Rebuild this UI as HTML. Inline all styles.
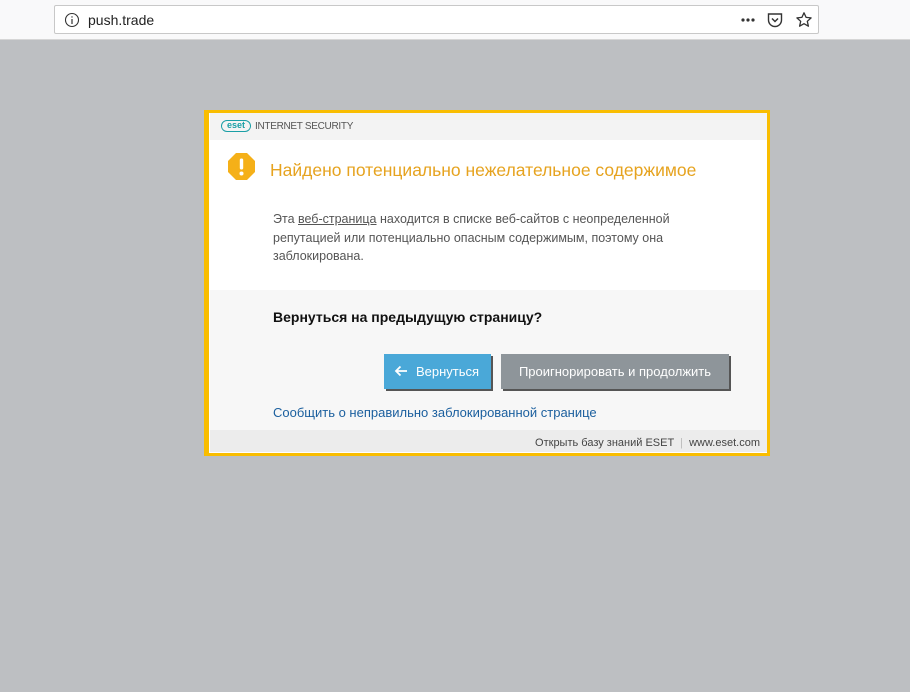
<!DOCTYPE html>
<html><head><meta charset="utf-8"><style>
*{margin:0;padding:0;box-sizing:border-box}
body{width:910px;height:692px;background:#bdbfc2;font-family:"Liberation Sans","DejaVu Sans",sans-serif;position:relative;overflow:hidden}
.top{position:absolute;left:0;top:0;width:910px;height:40px;background:#f9f9fa;border-bottom:1px solid #d6d6d6}
.url{position:absolute;left:54px;top:5px;width:765px;height:29px;background:#fff;border:1px solid #c8c8c8;border-radius:2px}
.url .t{position:absolute;left:33px;top:6px;font-size:14px;color:#222}
.dlg{position:absolute;left:204px;top:110px;width:566px;height:346px;background:#fff;border:3px solid #f9bd00;border-left-width:5px;overflow:hidden}
.hdr{position:absolute;left:1px;top:0;right:0;height:27px;background:#f3f3f3}
.logo{position:absolute;left:11px;top:7px;height:12px;width:30px;border:1.5px solid #1a9fa6;border-radius:6px;color:#1a9fa6;font-size:9px;font-weight:bold;line-height:9px;text-align:center}
.is{position:absolute;left:45px;top:8px;font-size:10px;color:#555;letter-spacing:-0.3px}
.ttl{position:absolute;left:61px;top:47px;font-size:17.5px;color:#e6a31f}
.desc{position:absolute;left:64px;top:97px;font-size:12.5px;color:#555;line-height:18.5px;width:440px}
.desc u{color:#555}
.gray{position:absolute;left:1px;top:177px;right:0;height:141px;background:#f7f7f7}
.q{position:absolute;left:64px;top:196px;font-size:14px;font-weight:bold;color:#111}
.b1{position:absolute;left:175px;top:241px;width:107px;height:35px;background:#4aa8d8;color:#fff;font-size:13px;line-height:35px;box-shadow:2px 2px 0 #555}
.b2{position:absolute;left:292px;top:241px;width:228px;height:35px;background:#8e959a;color:#fff;font-size:13px;line-height:35px;text-align:center;box-shadow:2px 2px 0 #555}
.lnk{position:absolute;left:64px;top:292px;font-size:13px;color:#1b5f9e}
.ft{position:absolute;left:1px;top:317px;right:0;height:22px;background:#ececec;font-size:11px;color:#444;text-align:right;padding:7px 7px 0 0}
</style></head><body>
<div class="top"><div class="url">
<svg style="position:absolute;left:9px;top:6px" width="16" height="16" viewBox="0 0 16 16"><circle cx="8" cy="8" r="6.5" fill="none" stroke="#333" stroke-width="1.1"/><rect x="7.4" y="7" width="1.2" height="5" fill="#333"/><rect x="7.4" y="4.3" width="1.2" height="1.3" fill="#333"/></svg>
<span class="t">push.trade</span>
<svg style="position:absolute;left:684px;top:9px" width="20" height="10"><circle cx="4" cy="5" r="1.6" fill="#333"/><circle cx="9" cy="5" r="1.6" fill="#333"/><circle cx="14" cy="5" r="1.6" fill="#333"/></svg>
<svg style="position:absolute;left:711px;top:5px" width="18" height="18" viewBox="0 0 18 18"><path d="M2.5 3h13v6a6.5 6.5 0 0 1-13 0z" fill="none" stroke="#333" stroke-width="1.4"/><path d="M6 7.5l3 3 3-3" fill="none" stroke="#333" stroke-width="1.5"/></svg>
<svg style="position:absolute;left:740px;top:5px" width="18" height="18" viewBox="0 0 18 18"><path d="M9 1.8l2.1 4.6 5 .5-3.8 3.4 1.1 4.9L9 12.7l-4.4 2.5 1.1-4.9L1.9 6.9l5-.5z" fill="none" stroke="#333" stroke-width="1.3" stroke-linejoin="round"/></svg>
</div></div>
<div class="dlg">
<div class="hdr"><div class="logo">eset</div><div class="is">INTERNET SECURITY</div></div>
<svg style="position:absolute;left:19px;top:40px" width="27" height="27" viewBox="0 0 27 27"><polygon points="8,0 19,0 27,8 27,19 19,27 8,27 0,19 0,8" fill="#f5b018"/><rect x="11.8" y="5.5" width="3.4" height="11" rx="1.5" fill="#fff"/><circle cx="13.5" cy="20.5" r="2" fill="#fff"/></svg>
<div class="ttl">Найдено потенциально нежелательное содержимое</div>
<div class="desc">Эта <u>веб-страница</u> находится в списке веб-сайтов с неопределенной репутацией или потенциально опасным содержимым, поэтому она заблокирована.</div>
<div class="gray"></div>
<div class="q">Вернуться на предыдущую страницу?</div>
<div class="b1"><svg style="position:absolute;left:10px;top:11px" width="14" height="12" viewBox="0 0 14 12"><path d="M13 6H2M6.5 1.5L2 6l4.5 4.5" fill="none" stroke="#fff" stroke-width="1.8"/></svg><span style="position:absolute;left:32px">Вернуться</span></div>
<div class="b2">Проигнорировать и продолжить</div>
<div class="lnk">Сообщить о неправильно заблокированной странице</div>
<div class="ft">Открыть базу знаний ESET &nbsp;<span style="color:#bbb">|</span>&nbsp; www.eset.com</div>
</div>
</body></html>
